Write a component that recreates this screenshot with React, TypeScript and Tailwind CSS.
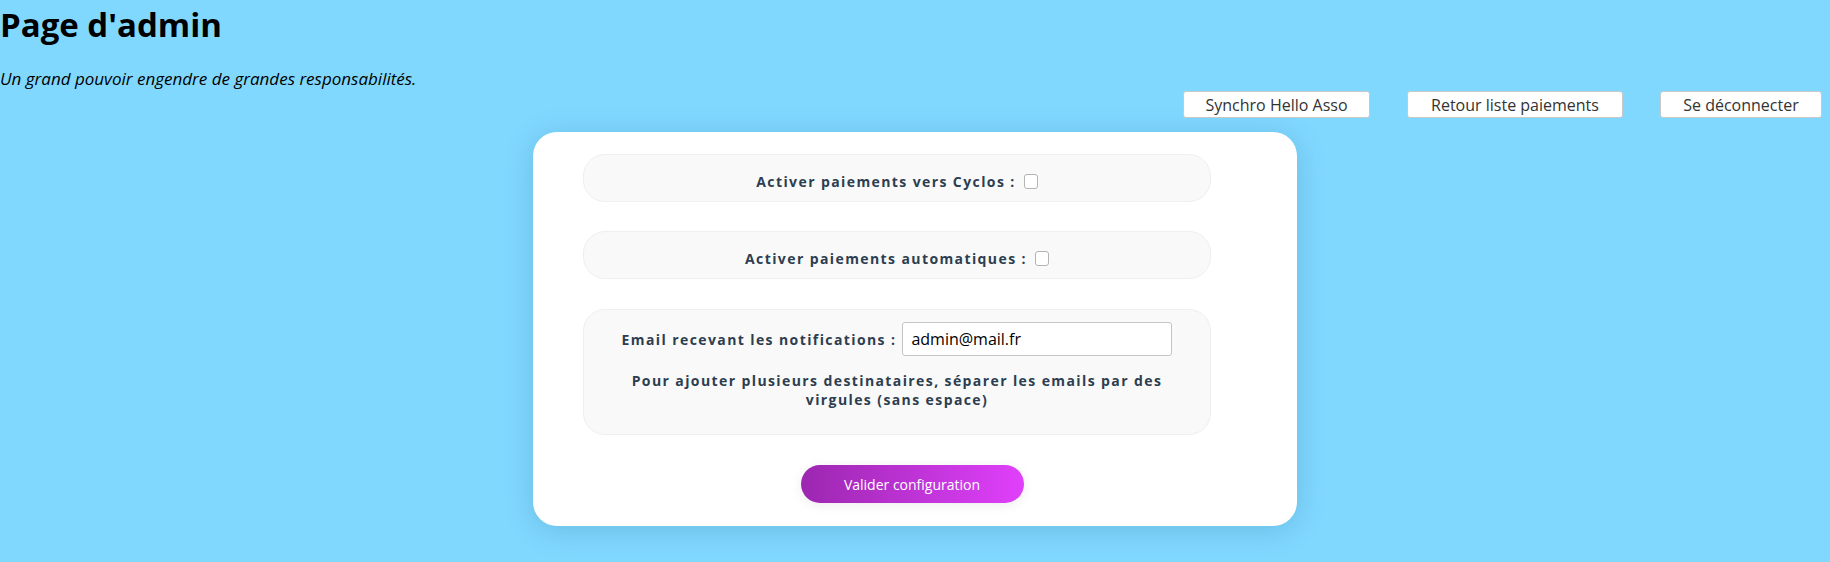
import React from 'react'

// --- Top navigation buttons ---
function NavButton({ children, className }: { children: React.ReactNode; className?: string }) {
  return (
    <button
      type="button"
      className={`h-[27px] rounded-[3px] border border-[#c8c8c8] bg-white text-[16px] leading-none text-[#333] ${className ?? ''}`}
    >
      {children}
    </button>
  )
}

// --- Option panel (grey pill) ---
function Panel({ children, className }: { children: React.ReactNode; className?: string }) {
  return (
    <div
      className={`w-[628px] rounded-[22px] border border-[#efefef] bg-[#f9f9f9] text-[14px] font-bold tracking-[1.4px] text-[#2c3e50] ${className ?? ''}`}
    >
      {children}
    </div>
  )
}

function Checkbox() {
  return (
    <input
      type="checkbox"
      className="ml-2 h-[15px] w-[14px] appearance-none rounded-[3px] border border-[#b4b4b4] bg-white"
    />
  )
}

export default function App() {
  return (
    <div className="min-h-screen bg-[#80d8ff] pt-[6px] font-['Open_Sans',sans-serif] text-black">
      <h1 className="text-[33px] font-bold leading-[37px]">Page d'admin</h1>
      <p className="mt-[24px] text-[17px] italic leading-[24px]">
        Un grand pouvoir engendre de grandes responsabilités.
      </p>

      <div className="flex justify-end gap-[37px] pr-2">
        <NavButton className="w-[187px]">Synchro Hello Asso</NavButton>
        <NavButton className="w-[216px]">Retour liste paiements</NavButton>
        <NavButton className="w-[162px]">Se déconnecter</NavButton>
      </div>

      <div className="mx-auto mt-[14px] flex w-[764px] flex-col rounded-[24px] bg-white pb-[23px] pl-[50px] pt-[22px] shadow-[0_4px_30px_rgba(0,60,100,0.18)]">
        <Panel className="flex h-[48px] items-center justify-center pt-[6px]">
          <span>Activer paiements vers Cyclos :</span>
          <Checkbox />
        </Panel>

        <Panel className="mt-[29px] flex h-[48px] items-center justify-center pt-[6px]">
          <span>Activer paiements automatiques :</span>
          <Checkbox />
        </Panel>

        <Panel className="mt-[30px] h-[126px] pt-[12px] text-center">
          <div className="flex items-center justify-center">
            <span>Email recevant les notifications :</span>
            <input
              type="text"
              defaultValue="admin@mail.fr"
              className="ml-[6px] h-[34px] w-[270px] rounded-[3px] border border-[#c4c4c4] bg-white px-2 text-[16px] font-normal tracking-normal text-black outline-none"
            />
          </div>
          <p className="mt-[15px] leading-[19px]">
            Pour ajouter plusieurs destinataires, séparer les emails par des
            <br />
            virgules (sans espace)
          </p>
        </Panel>

        <button
          type="button"
          className="mt-[30px] h-[38px] w-[223px] self-center -translate-x-[28px] rounded-full bg-gradient-to-r from-[#9c27b0] to-[#e040fb] text-[14px] text-white shadow-[0_2px_12px_rgba(0,0,0,0.08)]"
        >
          Valider configuration
        </button>
      </div>
    </div>
  )
}
